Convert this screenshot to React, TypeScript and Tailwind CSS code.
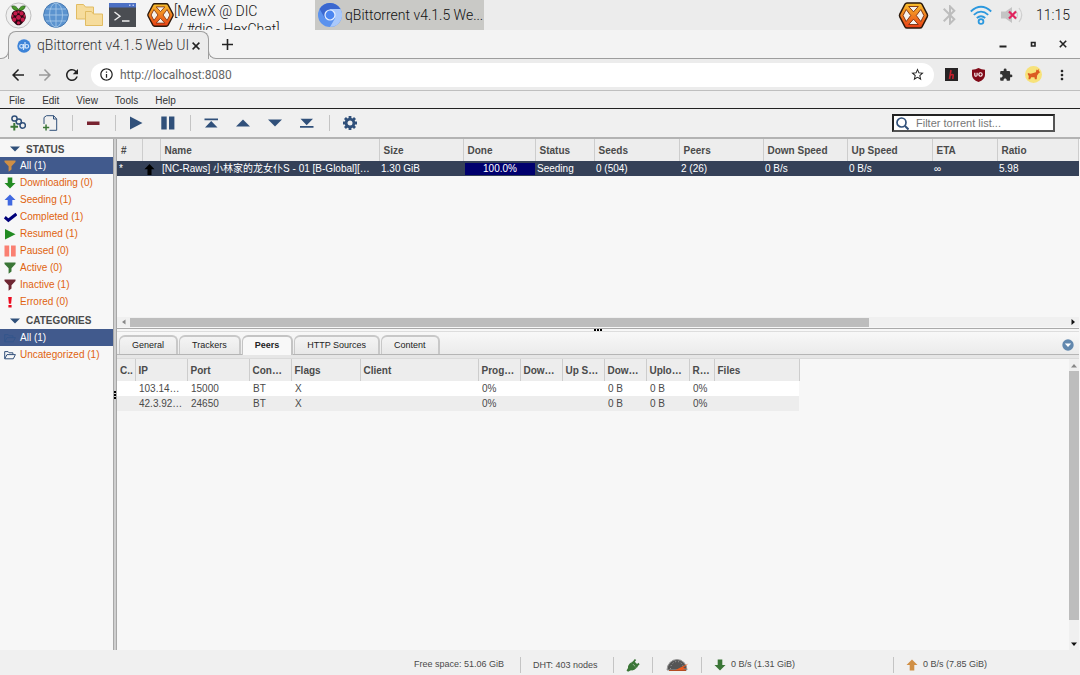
import type { ReactNode } from "react";
import {
  MdArrowBack,
  MdArrowForward,
  MdBluetooth,
  MdExtension,
  MdInfoOutline,
  MdMoreVert,
  MdRefresh,
  MdStarBorder,
} from "react-icons/md";

const menus = ["File", "Edit", "View", "Tools", "Help"];

const torrentColumns = [
  { label: "#", width: "w-[25px]", value: "*" },
  { label: "", width: "w-[18px]", value: "" },
  { label: "Name", width: "w-[219px]", value: "[NC-Raws] 小林家的龙女仆S - 01 [B-Global][…" },
  { label: "Size", width: "w-[84px]", value: "1.30 GiB" },
  { label: "Done", width: "w-[72px]", value: "100.0%" },
  { label: "Status", width: "w-[59px]", value: "Seeding" },
  { label: "Seeds", width: "w-[85px]", value: "0 (504)" },
  { label: "Peers", width: "w-[84px]", value: "2 (26)" },
  { label: "Down Speed", width: "w-[84px]", value: "0 B/s" },
  { label: "Up Speed", width: "w-[85px]", value: "0 B/s" },
  { label: "ETA", width: "w-[65px]", value: "∞" },
  { label: "Ratio", width: "", value: "5.98" },
];

const peerColumns = [
  { id: "country", label: "C..", width: "w-[18px]" },
  { id: "ip", label: "IP", width: "w-[52px]" },
  { id: "port", label: "Port", width: "w-[62px]" },
  { id: "connection", label: "Con…", width: "w-[42px]" },
  { id: "flags", label: "Flags", width: "w-[69px]" },
  { id: "client", label: "Client", width: "w-[118px]" },
  { id: "progress", label: "Prog…", width: "w-[42px]" },
  { id: "dl_speed", label: "Dow…", width: "w-[42px]" },
  { id: "up_speed", label: "Up S…", width: "w-[42px]" },
  { id: "downloaded", label: "Dow…", width: "w-[42px]" },
  { id: "uploaded", label: "Uplo…", width: "w-[43px]" },
  { id: "relevance", label: "R…", width: "w-[25px]" },
  { id: "files", label: "Files", width: "w-[85px]" },
];

const peers = [
  ["", "103.14…", "15000", "BT", "X", "", "0%", "", "", "0 B", "0 B", "0%", ""],
  ["", "42.3.92…", "24650", "BT", "X", "", "0%", "", "", "0 B", "0 B", "0%", ""],
];

function Funnel({ color }: { color: string }) {
  return (
    <svg viewBox="0 0 12 12" className="size-3">
      <path d="M0.5 0.5h11v1.5L7.5 6.3v3.2L4.6 11.8V6.3L0.5 2z" fill={color} />
    </svg>
  );
}

function Arrow({ color, up }: { color: string; up?: boolean }) {
  return (
    <svg viewBox="0 0 12 12" className={up ? "size-3" : "size-3 rotate-180"}>
      <path d="M6 0.5l5.5 5.6H8.3v5.4H3.7V6.1H0.5z" fill={color} />
    </svg>
  );
}

function Folder({ color }: { color: string }) {
  return (
    <svg viewBox="0 0 12 12" className="size-3" fill="none" stroke={color} strokeLinejoin="round">
      <path d="M0.7 9.5V2.6h3.4l1 1.2h3.8v1.8M0.7 9.8l2.3-4.2h8.4l-2.1 4.2z" />
    </svg>
  );
}

const filters = [
  { label: "All (1)", icon: <Funnel color="#d08f45" /> },
  { label: "Downloading (0)", icon: <Arrow color="#228b22" /> },
  { label: "Seeding (1)", icon: <Arrow color="#4169e1" up /> },
  {
    label: "Completed (1)",
    icon: (
      <svg viewBox="0 0 13 12" className="h-3 w-[13px]" fill="none" stroke="#00007a" strokeWidth="3">
        <path d="M0.8 6.2l3.6 3.1 8-6.3" />
      </svg>
    ),
  },
  {
    label: "Resumed (1)",
    icon: (
      <svg viewBox="0 0 12 12" className="size-3">
        <path d="M1 1l10.5 5.2L1 11.5z" fill="#228b22" />
      </svg>
    ),
  },
  {
    label: "Paused (0)",
    icon: (
      <svg viewBox="0 0 12 12" className="size-3">
        <path d="M0.5 0.5h4.7v11H0.5zM7 0.5h4.7v11H7z" fill="#fa8072" />
      </svg>
    ),
  },
  { label: "Active (0)", icon: <Funnel color="#3b7637" /> },
  { label: "Inactive (1)", icon: <Funnel color="#6e2632" /> },
  {
    label: "Errored (0)",
    icon: (
      <svg viewBox="0 0 12 12" className="size-3">
        <path d="M4.2 1h3.6l-.7 6.8H4.9zM4.4 9h3.2v2.6H4.4z" fill="#ec0a1e" />
      </svg>
    ),
  },
];

const categories = [
  { label: "All (1)", icon: <Folder color="#34568c" /> },
  { label: "Uncategorized (1)", icon: <Folder color="#33507a" /> },
];

function HexChat({ className }: { className: string }) {
  return (
    <svg viewBox="0 0 30 27" className={className}>
      <defs>
        <linearGradient id="hex" x1="0" y1="0" x2="0" y2="1">
          <stop offset="0" stopColor="#f9c12c" />
          <stop offset="1" stopColor="#e83d14" />
        </linearGradient>
      </defs>
      <path
        d="M8.5 1h13q1.3 0 2 1.2l5.2 9.9q.7 1.4 0 2.8l-5.2 9.9q-.7 1.2-2 1.2h-13q-1.3 0-2-1.2L1.3 14.9q-.7-1.4 0-2.8l5.2-9.9Q7.2 1 8.5 1z"
        fill="url(#hex)"
        stroke="#2d1a0c"
        strokeWidth="1.5"
      />
      <g fill="#f6f2ec" stroke="#7a2f0c" strokeWidth=".9" strokeLinejoin="round">
        <path d="M10.2 4.5h9.600L15 9.800z" />
        <path d="M10.2 22.500h9.600L15 17.200z" />
        <path d="M7.700 7.500L4.600 13.500l3.100 6 4.500-6z" />
        <path d="M22.300 7.500l3.100 6-3.100 6-4.500-6z" />
      </g>
    </svg>
  );
}

function Taskbar() {
  return (
    <header className="flex h-[30px] shrink-0 overflow-hidden bg-[#ececec] font-[Roboto,sans-serif] text-[14px] font-light text-[#111]">
      <div className="flex items-center bg-[#f4f4f4] pl-[5px]">
        <button aria-label="Menu" className="mr-[11px]">
          <svg viewBox="0 0 28 28" className="size-[27px]">
            <circle cx="14" cy="14" r="13" fill="#efefef" stroke="#bdbdbd" />
            <path d="M14 8.500C12.500 4.500 9.500 3.500 7 4.300 7.500 7 9.500 8.800 13 9zM14 8.500c1.500-4 4.500-5 7-4.200-.5 2.700-2.500 4.500-6 4.700z" fill="#4a9a2c" stroke="#1f4d14" strokeWidth=".7" />
            <path d="M14 8.500c4.500-.5 7.300 2 7 5 1.600 3-.5 6-2.400 7.700C17 23.200 15.500 24.200 14 24.200s-3-1-4.600-3C7.500 19.500 5.400 16.500 7 13.500c-.3-3 2.500-5.500 7-5z" fill="#2b0712" />
            <g fill="#c51a4a">
              <circle cx="14" cy="16" r="2.500" />
              <circle cx="10.800" cy="11.800" r="2.100" />
              <circle cx="17.200" cy="11.800" r="2.100" />
              <circle cx="14" cy="10.400" r="1.300" />
              <circle cx="9.600" cy="18.300" r="2.100" />
              <circle cx="18.400" cy="18.300" r="2.100" />
              <circle cx="14" cy="21.600" r="1.700" />
              <ellipse cx="7.900" cy="14.500" rx="1" ry="1.800" />
              <ellipse cx="20.100" cy="14.500" rx="1" ry="1.800" />
            </g>
          </svg>
        </button>
        <button aria-label="Web browser" className="mr-[7px]">
          <svg viewBox="0 0 26 26" className="size-[26px]">
            <circle cx="13" cy="13" r="12.300" fill="#5b93cf" stroke="#4678b0" />
            <g fill="none" stroke="#a3c6e8" strokeWidth=".9">
              <ellipse cx="13" cy="13" rx="6.500" ry="12" />
              <path d="M13 1v24M1 13h24M3 7h20M3 19h20" />
            </g>
          </svg>
        </button>
        <button aria-label="File manager" className="mr-[6px]">
          <svg viewBox="0 0 27 22" className="h-[22px] w-[27px]" fill="#f6dc9c" stroke="#e1bc63">
            <path d="M.5.5h7l2 2.500h8v12H.5z" />
            <path d="M9.500 7.500h6l2 2.500h9v11.500h-17z" />
          </svg>
        </button>
        <button aria-label="Terminal" className="mr-[11px]">
          <svg viewBox="0 0 27 24" className="h-6 w-[27px]">
            <path d="M0 0h27v24H0z" fill="#4a4d52" />
            <path d="M0 0h27v4.500H0z" fill="#4c70c4" />
            <path d="M20 1.500h1.500v1.500H20zM23.500 1.500H25v1.500h-1.500z" fill="#b7c8ef" />
            <path d="M5.500 9l5.500 4.200-5.500 4M13 18h7.500" fill="none" stroke="#eee" strokeWidth="1.400" />
          </svg>
        </button>
        <button className="flex w-[168px] items-center text-left">
          <HexChat className="h-[26px] w-[27px]" />
          <span className="h-[30px] flex-1 overflow-hidden pt-[2px] leading-[18px]">
            [MewX @ DIC
            <br />
            &nbsp;/ #dic - HexChat]
          </span>
        </button>
      </div>
      <button className="flex w-[169px] items-center gap-[3px] bg-[#c9c9c6] pl-[3px] whitespace-nowrap">
        <svg viewBox="0 0 24 24" className="size-6 shrink-0">
          <circle cx="12" cy="12" r="12" fill="#5b92ee" />
          <path d="M1.600 6A12 12 0 0 1 22.400 6H12L6.800 15z" fill="#3a67cf" />
          <path d="M22.400 6A12 12 0 0 1 12 24l5.200-9L12 6z" fill="#a9c8fb" />
          <circle cx="12" cy="12" r="5.600" fill="#e8f0fe" />
          <circle cx="12" cy="12" r="4.400" fill="#4c86f0" />
        </svg>
        <span>qBittorrent v4.1.5 We...</span>
      </button>
      <div className="ml-auto flex items-center pr-[10px]">
        <HexChat className="mr-[9px] h-[27px] w-[31px]" />
        <MdBluetooth className="mr-[8px] size-6 text-[#bdbdbd]" />
        <svg viewBox="0 0 22 20" className="mr-[9px] h-5 w-[22px]" fill="none" stroke="#2b98de" strokeWidth="1.800">
          <path d="M.8 6.500q10.200-9.500 20.400 0M3.800 9.800q7.200-6.400 14.400 0M6.800 13q4.200-3.600 8.400 0" />
          <circle cx="11" cy="16.500" r="2.400" />
        </svg>
        <svg viewBox="0 0 22 18" className="mr-[13px] h-[18px] w-[22px]">
          <path d="M0 5.500h4.500L11 1v16l-6.500-4.500H0z" fill="#c4c4c4" />
          <path d="M14.500 4.500q4 4.500 0 9M18 2q5.500 7 0 14" fill="none" stroke="#cfcfcf" strokeWidth="1.200" />
          <path d="M8 5.500l7 7M15 5.500l-7 7" stroke="#e0245e" strokeWidth="2.200" />
        </svg>
        <span>11:15</span>
      </div>
    </header>
  );
}

function BrowserChrome() {
  return (
    <div className="shrink-0 font-[Roboto,sans-serif]">
      <div className="flex h-[29px] bg-[#f3f3f3]">
        <div className="-mr-px h-[9px] w-[9px] self-end rounded-br-lg border-r border-b border-[#9d9d9d]" />
        <div className="mt-px flex w-[201px] items-center rounded-t-lg border-x border-t border-[#9d9d9d] bg-[#ececec] pl-2 text-[14px] font-light text-[#333]">
          <svg viewBox="0 0 14 14" className="mr-[6px] size-[14px] shrink-0">
            <circle cx="7" cy="7" r="6.700" fill="#3c83d8" />
            <g fill="none" stroke="#cfe3fa" strokeWidth="1.200">
              <circle cx="4.500" cy="7.300" r="1.800" />
              <path d="M6.500 5v6M8 3v6.500" />
              <circle cx="9.800" cy="7.300" r="1.800" />
            </g>
          </svg>
          <span className="whitespace-nowrap">qBittorrent v4.1.5 Web UI</span>
          <button aria-label="Close tab" className="ml-auto pr-2">
            <svg viewBox="0 0 8 8" className="size-2" stroke="#222" strokeWidth="1.500">
              <path d="M.6.6l6.800 6.800M7.400.6L.6 7.400" />
            </svg>
          </button>
        </div>
        <div className="-ml-px h-[9px] w-[9px] self-end rounded-bl-lg border-b border-l border-[#9d9d9d]" />
        <div className="flex flex-1 items-center border-b border-[#9d9d9d]">
          <button aria-label="New tab" className="ml-[5px]">
            <svg viewBox="0 0 11 11" className="size-[11px]" stroke="#222" strokeWidth="1.600">
              <path d="M5.500 0v11M0 5.500h11" />
            </svg>
          </button>
          <div className="ml-auto flex items-center gap-[22px] pr-[13px]">
            <button aria-label="Minimize">
              <svg viewBox="0 0 8 8" className="size-2">
                <path d="M.5 5.500h7v2h-7z" fill="#222" />
              </svg>
            </button>
            <button aria-label="Maximize">
              <svg viewBox="0 0 8 8" className="size-2">
                <path d="M2.500 2.500h3.500v3.500H2.500z" fill="none" stroke="#222" strokeWidth="1.600" />
              </svg>
            </button>
            <button aria-label="Close">
              <svg viewBox="0 0 8 8" className="size-2" stroke="#222" strokeWidth="1.600">
                <path d="M.8.8l6.400 6.400M7.200.8L.8 7.200" />
              </svg>
            </button>
          </div>
        </div>
      </div>
      <div className="flex h-8 items-center border-b border-[#bfbfbf] bg-[#ececec] pr-[10px] pl-[9px] text-[#222]">
        <button aria-label="Back" className="mr-[9px]">
          <MdArrowBack className="size-[18px]" />
        </button>
        <button aria-label="Forward" className="mr-[9px]">
          <MdArrowForward className="size-[18px] text-[#9a9a9a]" />
        </button>
        <button aria-label="Reload" className="mr-[10px]">
          <MdRefresh className="size-[18px]" />
        </button>
        <div className="mr-[11px] flex h-6 flex-1 items-center rounded-full bg-white pr-[9px] pl-2">
          <MdInfoOutline className="mr-[6px] size-[15px]" />
          <input
            aria-label="Address"
            defaultValue="http://localhost:8080"
            className="min-w-0 flex-1 bg-transparent text-[12px] text-[#666] outline-none"
          />
          <button aria-label="Bookmark">
            <MdStarBorder className="size-[15px]" />
          </button>
        </div>
        <div className="flex items-center gap-[14px]">
          <svg viewBox="0 0 13 13" className="size-[13px]">
            <path d="M0 0h13v13H0z" fill="#262324" />
            <path d="M6 2L4.500 11M4.900 7.500q3.500-2 3.300 0L7.800 11" fill="none" stroke="#c4202d" strokeWidth="1.600" />
          </svg>
          <svg viewBox="0 0 13 14" className="h-[14px] w-[13px]">
            <path d="M6.500 0Q9.500 1.800 13 1.800V7q0 4.500-6.500 7Q0 11.500 0 7V1.800Q3.500 1.800 6.500 0z" fill="#800a18" />
            <path d="M2.800 4.800v2.500q0 1 1.100 1t1.200-1V4.800" fill="none" stroke="#fff" strokeWidth="1.100" />
            <circle cx="8.500" cy="6.500" r="1.700" fill="none" stroke="#fff" strokeWidth="1.100" />
          </svg>
          <MdExtension className="size-[14px] text-[#333]" />
          <svg viewBox="0 0 18 18" className="-mx-[2px] size-[17px]">
            <circle cx="9" cy="9" r="9" fill="#f7e27a" />
            <path d="M3 7.500Q2.500 9 4 10.500L3.700 14h1.800l1-2h3.500l.5 2h1.900l.4-4 1.900-2.500 1.400-.8-1.400-1.500-.3-2-1.300 1.300-1-.8-.6 3L6 8.300z" fill="#dc5a22" />
          </svg>
          <button aria-label="Browser menu">
            <MdMoreVert className="size-4" />
          </button>
        </div>
      </div>
    </div>
  );
}

function ToolButton({ label, children }: { label: string; children: ReactNode }) {
  return (
    <button aria-label={label} className="flex h-5 w-8 items-center justify-center">
      <svg viewBox="0 0 16 16" className="size-4" fill="#30507a">
        {children}
      </svg>
    </button>
  );
}

function Divider() {
  return <div className="mr-1 ml-[6px] h-4 w-px bg-[#c4c4c4]" />;
}

function Toolbar() {
  return (
    <div className="flex h-[30px] shrink-0 items-center border-b-2 border-[#b3b3b3] bg-[#f0f0f0] pr-[25px] pl-[2px]">
      <ToolButton label="Add torrent link">
        <g fill="none" stroke="#30507a" strokeWidth="1.500">
          <circle cx="4.500" cy="3.500" r="2.600" />
          <circle cx="8.800" cy="6.500" r="2.600" />
          <circle cx="12.700" cy="10.500" r="2.700" />
        </g>
        <path d="M3.300 8h2v2.700H8v2H5.300v2.800h-2v-2.800H.5v-2h2.800z" fill="#3b7637" />
      </ToolButton>
      <ToolButton label="Add torrent file">
        <path d="M2 9V2.500L4.500.700h7.200l3 3.300v11.300H7.500M11.500.700V4h3" fill="none" stroke="#30507a" />
        <path d="M3.300 9.500h1.500v2.200h2.400v1.500H4.800v2.400H3.300v-2.400H1v-1.500h2.300z" fill="#3b7637" />
      </ToolButton>
      <Divider />
      <ToolButton label="Delete">
        <path d="M2 6.500h12.500V10H2z" fill="#782330" />
      </ToolButton>
      <Divider />
      <ToolButton label="Resume">
        <path d="M2 1.500l12.500 6.500L2 14.500z" />
      </ToolButton>
      <ToolButton label="Pause">
        <path d="M1.300 1.500h5.400v13H1.300zM9 1.500h5.400v13H9z" />
      </ToolButton>
      <Divider />
      <ToolButton label="Top of queue">
        <path d="M1.500 3.500H15v1.800H1.500zM8.200 6l6.300 6.500H2z" />
      </ToolButton>
      <ToolButton label="Move up">
        <path d="M8 4.500l7 7H1z" />
      </ToolButton>
      <ToolButton label="Move down">
        <path d="M8 11.500l7-7H1z" />
      </ToolButton>
      <ToolButton label="Bottom of queue">
        <path d="M1 11h13.500v1.800H1zM7.700 10.300l6.300-6.500H1.500z" />
      </ToolButton>
      <Divider />
      <ToolButton label="Options">
        <circle cx="8" cy="8" r="3.900" fill="none" stroke="#30507a" strokeWidth="2.800" />
        <path
          d="M8 1v2.500M8 12.500V15M1 8h2.500M12.500 8H15M3 3l1.900 1.900M11.100 11.100L13 13M3 13l1.900-1.900M11.100 4.900L13 3"
          stroke="#30507a"
          strokeWidth="2.800"
        />
      </ToolButton>
      <label className="ml-auto flex h-[18px] w-[163px] items-center border-2 border-[#222] border-r-[#555] border-b-[#555] bg-white pl-[2px]">
        <svg viewBox="0 0 13 13" className="size-[13px] shrink-0" fill="none" stroke="#30507a">
          <circle cx="5.500" cy="5.500" r="4.500" strokeWidth="1.700" />
          <path d="M9 9l3.500 3.500" strokeWidth="2" />
        </svg>
        <input
          aria-label="Filter torrent list"
          placeholder="Filter torrent list..."
          className="ml-[7px] w-full min-w-0 bg-transparent text-[11px] outline-none placeholder:text-[#777]"
        />
      </label>
    </div>
  );
}

function FilterGroup({ title, items, className }: { title: string; items: typeof filters; className: string }) {
  return (
    <section>
      <h2 className={`flex items-center gap-[6px] pt-[2px] pl-[10px] font-bold ${className}`}>
        <svg viewBox="0 0 10 6" className="h-[6px] w-[10px]">
          <path d="M0 .5h10L5 5.500z" fill="#30507a" />
        </svg>
        {title}
      </h2>
      <ul>
        {items.map((item, i) => (
          <li key={item.label}>
            <a
              href="#"
              className={`flex h-[17px] items-center pl-1 leading-[17px] ${i === 0 ? "bg-[#415a8d] text-white" : "text-[#e0630f]"}`}
            >
              <span className="w-4 shrink-0">{item.icon}</span>
              {item.label}
            </a>
          </li>
        ))}
      </ul>
    </section>
  );
}

function TorrentPanel() {
  return (
    <section className="flex min-h-0 flex-[189] flex-col">
      <table className="w-full table-fixed border-collapse text-left">
        <thead>
          <tr className="h-[22px] bg-[#ededed]">
            {torrentColumns.map((col) => (
              <th key={col.label} className={`border-r border-[#cdcdcd] pl-1 leading-[21px] ${col.width}`}>
                {col.label}
              </th>
            ))}
          </tr>
        </thead>
        <tbody>
          <tr className="h-[15px] bg-[#354158] text-white">
            {torrentColumns.map((col) => (
              <td key={col.label} className="pl-[2px] leading-[14px] whitespace-nowrap">
                {col.label === "Done" ? (
                  <div className="h-3 bg-[#00006e] text-center leading-3">{col.value}</div>
                ) : col.label === "" ? (
                  <svg viewBox="0 0 12 12" className="mt-[2px] size-[11px]">
                    <path d="M6 0l5.500 5.800H8.200V12H3.800V5.800H.5z" />
                  </svg>
                ) : (
                  col.value
                )}
              </td>
            ))}
          </tr>
        </tbody>
      </table>
      <div className="mt-auto mb-px flex h-[10px] items-center bg-[#f0f0f0]">
        <svg viewBox="0 0 13 10" className="h-[10px] w-[13px]">
          <path d="M8.500 2.500v5L5 5z" fill="#888" />
        </svg>
        <div className="h-[9px] flex-[739] bg-[#bdbdbd]" />
        <div className="flex-[198]" />
        <svg viewBox="0 0 12 10" className="h-[10px] w-3">
          <path d="M4.500 2v6L8 5z" fill="#111" />
        </svg>
      </div>
    </section>
  );
}

function PeersPanel() {
  const tabs = ["General", "Trackers", "Peers", "HTTP Sources", "Content"];
  return (
    <section className="flex min-h-0 flex-[322] flex-col">
      <div className="flex h-1 shrink-0 items-center justify-center gap-px border-y border-t-[#aaa] border-b-[#ddd]">
        <span className="size-[2px] bg-black" />
        <span className="size-[2px] bg-black" />
        <span className="size-[2px] bg-black" />
      </div>
      <div className="flex h-[23px] shrink-0 items-end gap-px border-b border-[#b5b5b5] bg-linear-to-b from-[#f8f8f8] to-[#ebebeb] pl-[2px] text-[9px]">
        {tabs.map((tab) => (
          <button
            key={tab}
            className={`rounded-t-md border-t-2 border-r-2 border-l px-3 text-[#222] ${
              tab === "Peers"
                ? "-mb-px h-5 border-[#c4c4c4] bg-[#f8f8f8] font-bold"
                : "h-[19px] border-[#c8c8c8] bg-linear-to-b from-[#f4f4f4] to-[#e8e8e8]"
            }`}
          >
            {tab}
          </button>
        ))}
        <button aria-label="Collapse panel" className="mr-[5px] mb-[3px] ml-auto">
          <svg viewBox="0 0 12 12" className="size-3">
            <circle cx="6" cy="6" r="5.700" fill="#6288ae" />
            <path d="M2.800 4.500h6.400L6 8z" fill="#fff" />
          </svg>
        </button>
      </div>
      <div className="h-1 shrink-0 border-b border-[#dadada] bg-[#e6e6e6]" />
      <div className="flex min-h-0 flex-1">
        <div className="min-w-0 flex-1 overflow-hidden">
          <table className="w-[682px] table-fixed border-collapse text-left">
            <thead>
              <tr className="h-[22px] bg-[#ededed]">
                {peerColumns.map((col) => (
                  <th key={col.id} className={`border-r border-[#cdcdcd] pl-[3px] whitespace-nowrap ${col.width}`}>
                    {col.label}
                  </th>
                ))}
              </tr>
            </thead>
            <tbody>
              {peers.map((row) => (
                <tr key={row[1]} className="odd:bg-white even:bg-[#ededed]">
                  {row.map((value, i) => (
                    <td key={peerColumns[i].id} className="h-[15px] pl-1 leading-[15px] whitespace-nowrap">
                      {value}
                    </td>
                  ))}
                </tr>
              ))}
            </tbody>
          </table>
        </div>
        <div className="flex w-[10px] flex-col bg-[#f0f0f0]">
          <svg viewBox="0 0 10 12" className="h-3 w-[10px]">
            <path d="M2 8.500h6L5 5z" fill="#888" />
          </svg>
          <div className="flex-[249] bg-[#bdbdbd]" />
          <div className="flex-[18]" />
          <svg viewBox="0 0 10 12" className="h-3 w-[10px]">
            <path d="M2 4.500h6L5 8z" fill="#111" />
          </svg>
        </div>
      </div>
    </section>
  );
}

function StatusBar() {
  return (
    <footer className="flex h-[25px] shrink-0 items-center justify-end bg-[#f0f0f0] pt-1 text-[9px]">
      <span className="pr-4">Free space: 51.06 GiB</span>
      <span className="w-[93px] border-l border-[#c4c4c4] pl-3 leading-4">DHT: 403 nodes</span>
      <span className="flex h-4 w-[39px] items-center justify-center border-l border-[#c4c4c4]">
        <svg viewBox="0 0 14 14" className="size-[14px]" fill="#3b7637">
          <path d="M5 4.500l5.500 5.500q-2.500 3-5.500 2.300L2 13.800.5 12.500 2 10Q1.500 7 5 4.500z" />
          <path d="M6 6l3.500-4.500M9.500 9L13 5.500" stroke="#3b7637" strokeWidth="1.800" />
          <path d="M5 4l6 6 1-3-3.500-3.500z" />
        </svg>
      </span>
      <span className="flex h-4 w-[49px] items-center justify-center border-l border-[#c4c4c4]">
        <svg viewBox="0 0 23 14" className="h-[14px] w-[23px]">
          <path d="M1 12A10 10.500 0 0 1 21 12z" fill="#555" stroke="#999" />
          <path d="M4.500 11a6.500 7.500 0 0 1 13 0" fill="none" stroke="#aaa" strokeDasharray="1 2" />
          <path d="M8.500 12.500L22.500 5.500 17 10l4 .5-8 2.500z" fill="#ee5a1c" />
          <path d="M3 12.500h17" stroke="#b34a22" />
        </svg>
      </span>
      <span className="flex h-4 w-[192px] items-center gap-[5px] border-l border-[#c4c4c4] pl-[12px]">
        <Arrow color="#3b7637" />
        0 B/s (1.31 GiB)
      </span>
      <span className="flex h-4 w-[187px] items-center gap-[5px] border-l border-[#c4c4c4] pl-[12px]">
        <Arrow color="#d08f45" up />
        0 B/s (7.85 GiB)
      </span>
    </footer>
  );
}

export default function App() {
  return (
    <div className="flex h-screen flex-col bg-[#f7f7f7] font-['Liberation_Sans','Noto_Sans_CJK_SC',sans-serif] text-[10px] text-[#4a4a4a]">
      <Taskbar />
      <BrowserChrome />
      <nav className="flex h-[18px] shrink-0 items-center gap-px border-b border-[#222] bg-[#f0f0f0] pt-px pl-px text-[#333]">
        {menus.map((menu) => (
          <button key={menu} className="px-2">
            {menu}
          </button>
        ))}
      </nav>
      <Toolbar />
      <main className="flex min-h-0 flex-1 pr-px">
        <aside className="w-[113px] shrink-0">
          <FilterGroup title="STATUS" items={filters} className="h-[18px]" />
          <FilterGroup title="CATEGORIES" items={categories} className="h-[19px]" />
        </aside>
        <div className="flex w-1 shrink-0 flex-col items-center justify-center gap-px border-x border-[#a8a8a8] bg-[#cfcfcf]">
          <span className="size-[2px] bg-black" />
          <span className="size-[2px] bg-black" />
          <span className="size-[2px] bg-black" />
        </div>
        <div className="flex min-w-0 flex-1 flex-col">
          <TorrentPanel />
          <PeersPanel />
        </div>
      </main>
      <StatusBar />
    </div>
  );
}
